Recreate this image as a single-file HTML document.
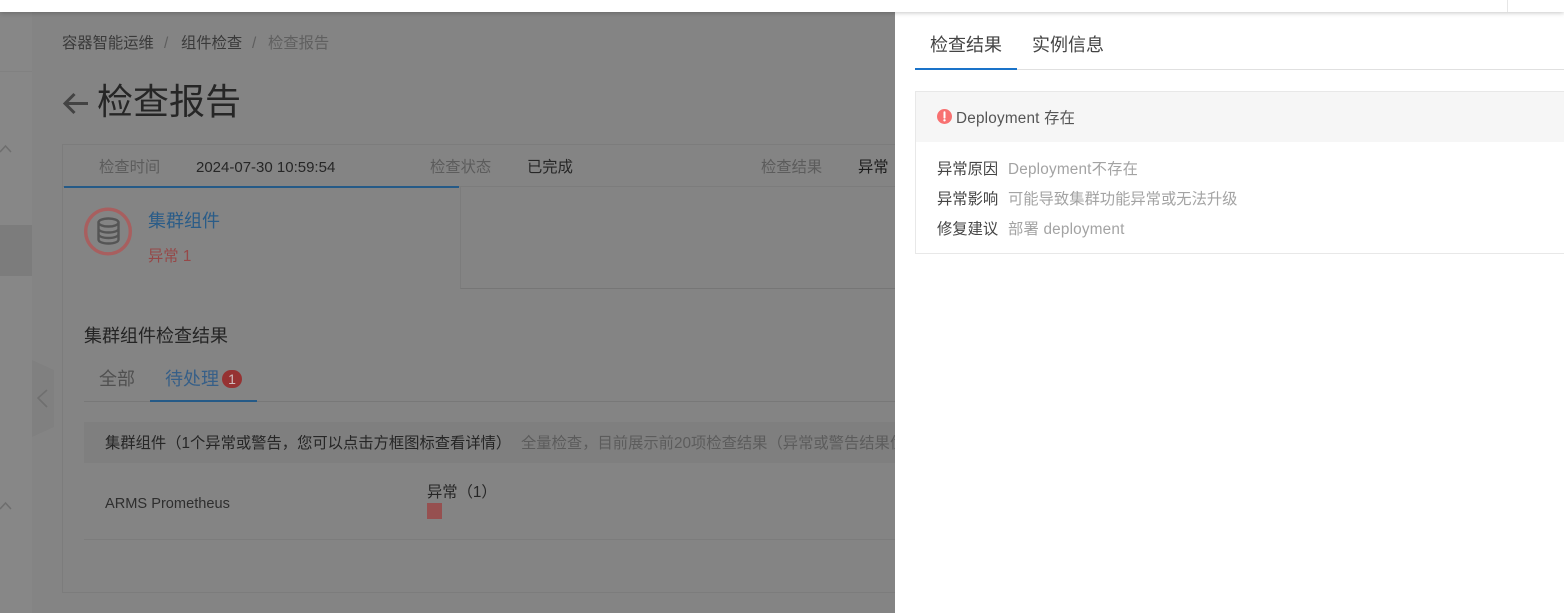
<!DOCTYPE html>
<html lang="zh-CN">
<head>
<meta charset="utf-8">
<title>检查报告</title>
<style>
html,body{margin:0;padding:0;width:1564px;height:613px;overflow:hidden;background:#fff}
body{font-family:"Liberation Sans","Noto Sans CJK SC",sans-serif;position:relative;color:#333}
.a{position:absolute;white-space:nowrap;line-height:20px;font-size:15.300px}
.box{position:absolute;box-sizing:border-box}
#main{position:absolute;left:0;top:0;width:895px;height:613px;background:#848484;overflow:hidden}
#top{position:absolute;left:0;top:0;width:1564px;height:12px;background:#fff;box-shadow:0 1px 5px rgba(0,0,0,.22);z-index:5}
#panel{position:absolute;left:895px;top:0;width:669px;height:613px;background:#fff;overflow:hidden}
</style>
</head>
<body>
<div id="main">
  <div class="box" style="left:0;top:0;width:32px;height:613px;background:#878787"></div>
  <div class="box" style="left:0;top:71px;width:32px;height:1px;background:#818181"></div>
  <div class="box" style="left:0;top:225px;width:32px;height:51px;background:#7c7c7c"></div>
  <svg class="box" style="left:0;top:140px" width="14" height="14" viewBox="0 0 14 14"><path d="M0 12L5.500 6L11 12" fill="none" stroke="#6e6e6e" stroke-width="1.500"/></svg>
  <svg class="box" style="left:0;top:497px" width="14" height="14" viewBox="0 0 14 14"><path d="M0 12L5.500 6L11 12" fill="none" stroke="#6e6e6e" stroke-width="1.500"/></svg>
  <svg class="box" style="left:32px;top:360px" width="22" height="78" viewBox="0 0 22 78"><path d="M0 0L22 10V67L0 77Z" fill="#808080"/><path d="M15 30L6 38L15 47" fill="none" stroke="#6f6f6f" stroke-width="1.600"/></svg>

  <div class="a" style="left:62px;top:34px;color:#3a3a3a">容器智能运维</div>
  <div class="a" style="left:164px;top:34px;color:#5e5e5e">/</div>
  <div class="a" style="left:181px;top:34px;color:#3a3a3a">组件检查</div>
  <div class="a" style="left:252px;top:34px;color:#5e5e5e">/</div>
  <div class="a" style="left:268px;top:34px;color:#606060">检查报告</div>

  <svg class="box" style="left:62px;top:91px" width="28" height="25" viewBox="0 0 28 25"><path d="M26 12.500H3M12.500 3L3 12.500L12.500 22" fill="none" stroke="#434343" stroke-width="3"/></svg>
  <div class="a" style="left:97px;top:78px;font-size:36px;line-height:48px;color:#262626">检查报告</div>

  <div class="box" style="left:62px;top:144px;width:860px;height:449px;border:1px solid #7c7c7c"></div>
  <div class="box" style="left:63px;top:186px;width:832px;height:1px;background:#7c7c7c"></div>
  <div class="box" style="left:64px;top:186px;width:395px;height:2px;background:#255a87"></div>
  <div class="box" style="left:460px;top:187px;width:440px;height:102px;border-left:1px solid #7c7c7c;border-bottom:1px solid #767676"></div>

  <div class="a" style="left:99px;top:158px;color:#5c5c5c">检查时间</div>
  <div class="a" style="left:196px;top:158px;font-size:15px;color:#262626">2024-07-30 10:59:54</div>
  <div class="a" style="left:430px;top:158px;color:#5c5c5c">检查状态</div>
  <div class="a" style="left:527px;top:158px;color:#262626">已完成</div>
  <div class="a" style="left:761px;top:158px;color:#5c5c5c">检查结果</div>
  <div class="a" style="left:858px;top:158px;color:#1c1c1c">异常</div>

  <svg class="box" style="left:84px;top:207px" width="48" height="49" viewBox="0 0 48 49"><circle cx="24" cy="24.500" r="22.300" fill="none" stroke="#a85f5f" stroke-width="3.400"/><g fill="none" stroke="#555" stroke-width="2.400"><ellipse cx="24.500" cy="15.500" rx="10" ry="4"/><path d="M14.500 15.500V32.500C14.500 35 19 36.500 24.500 36.500S34.500 35 34.500 32.500V15.500M14.500 21.500C14.500 24 19 25.500 24.500 25.500S34.500 24 34.500 21.500M14.500 27C14.500 29.500 19 31 24.500 31S34.500 29.500 34.500 27"/></g></svg>
  <div class="a" style="left:148px;top:209px;font-size:18px;line-height:24px;color:#2a5c88">集群组件</div>
  <div class="a" style="left:148px;top:247px;color:#964848">异常 1</div>

  <div class="a" style="left:84px;top:324px;font-size:18px;line-height:24px;color:#242424">集群组件检查结果</div>

  <div class="box" style="left:84px;top:401px;width:811px;height:1px;background:#787878"></div>
  <div class="box" style="left:150px;top:400px;width:107px;height:2px;background:#255a87"></div>
  <div class="a" style="left:99px;top:367px;font-size:18px;line-height:24px;color:#505050">全部</div>
  <div class="a" style="left:165px;top:367px;font-size:18px;line-height:24px;color:#365f88">待处理</div>
  <div class="box" style="left:222px;top:370px;width:20px;height:18px;border-radius:9px;background:#963232;color:#d0bcbc;font-size:14px;line-height:19px;text-align:center">1</div>

  <div class="box" style="left:84px;top:422px;width:811px;height:41px;background:#7f7f7f"></div>
  <div class="a" style="left:105px;top:434px;color:#262626">集群组件（1个异常或警告，您可以点击方框图标查看详情）</div>
  <div class="a" style="left:521px;top:434px;color:#5c5c5c">全量检查，目前展示前20项检查结果（异常或警告结果优先展示）</div>

  <div class="a" style="left:105px;top:494px;font-size:14.600px;color:#2e2e2e">ARMS Prometheus</div>
  <div class="a" style="left:427px;top:483px;color:#262626">异常（1）</div>
  <div class="box" style="left:427px;top:503px;width:15px;height:16px;background:#965050"></div>
  <div class="box" style="left:84px;top:539px;width:811px;height:1px;background:#7c7c7c"></div>
</div>

<div id="top">
  <div class="box" style="left:1507px;top:0;width:1px;height:12px;background:#e6e6e6"></div>
</div>

<div id="panel">
  <div class="box" style="left:20px;top:69px;width:649px;height:1px;background:#e0e0e0"></div>
  <div class="box" style="left:20px;top:68px;width:102px;height:2px;background:#1a73c9"></div>
  <div class="a" style="left:35px;top:33px;font-size:18px;line-height:24px;color:#444">检查结果</div>
  <div class="a" style="left:137px;top:33px;font-size:18px;line-height:24px;color:#444">实例信息</div>

  <div class="box" style="left:20px;top:91px;width:660px;height:163px;border:1px solid #e8e8e8">
    <div style="height:50px;background:#f6f6f6"></div>
  </div>
  <svg class="box" style="left:42px;top:109px" width="15" height="15" viewBox="0 0 15 15"><circle cx="7.500" cy="7.500" r="7.500" fill="#f87171"/><path d="M7.500 3.200V8.600" stroke="#fff" stroke-width="2" stroke-linecap="round"/><circle cx="7.500" cy="11.300" r="1.200" fill="#fff"/></svg>
  <div class="a" style="left:61px;top:109px;letter-spacing:.2px;color:#555">Deployment 存在</div>

  <div class="a" style="left:42px;top:160px;color:#444">异常原因</div>
  <div class="a" style="left:113px;top:160px;letter-spacing:.2px;color:#a3a3a3">Deployment不存在</div>
  <div class="a" style="left:42px;top:190px;color:#444">异常影响</div>
  <div class="a" style="left:113px;top:190px;color:#a3a3a3">可能导致集群功能异常或无法升级</div>
  <div class="a" style="left:42px;top:220px;color:#444">修复建议</div>
  <div class="a" style="left:113px;top:220px;letter-spacing:.2px;color:#a3a3a3">部署 deployment</div>
</div>
</body>
</html>
